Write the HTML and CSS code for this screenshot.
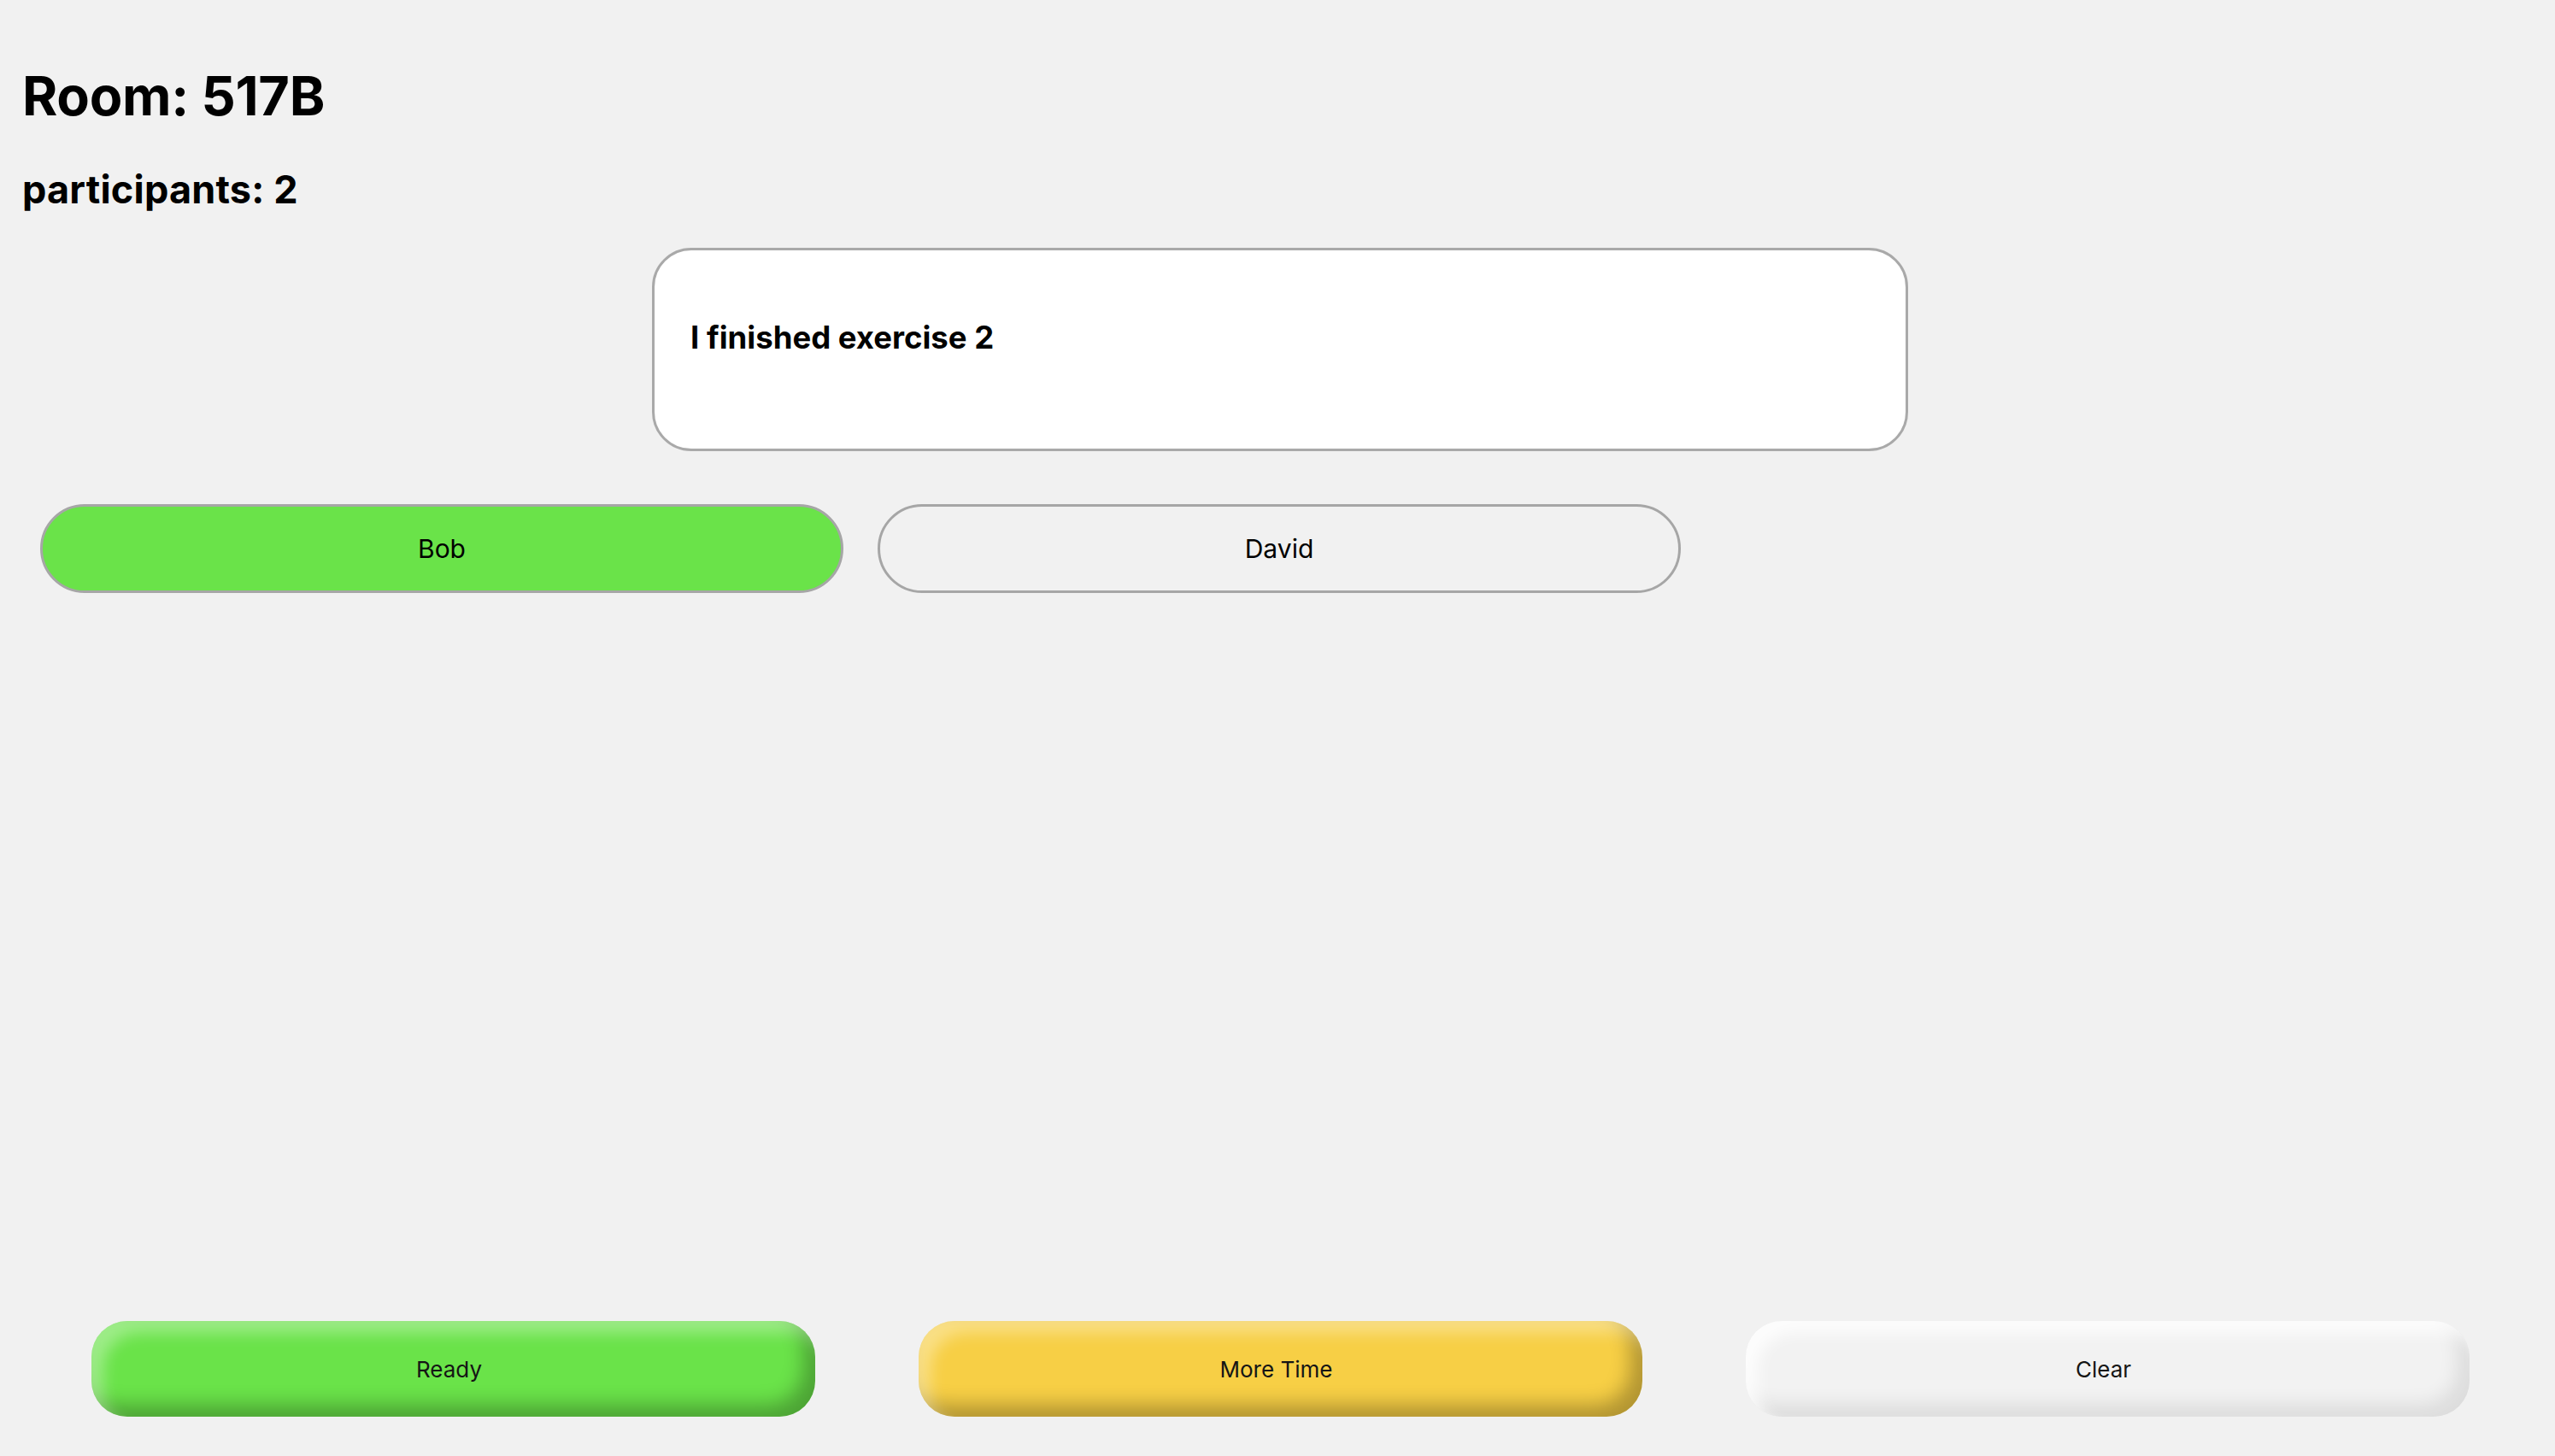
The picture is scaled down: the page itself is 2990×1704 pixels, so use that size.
FILE: index.html
```html
<!DOCTYPE html>
<html lang="en">
<head>
<meta charset="utf-8">
<title>Room 517B</title>
<link rel="stylesheet" href="styles.css">
</head>
<body>
<div class="page">
  <header class="header">
    <h1 class="room-title">Room: 517B</h1>
    <h3 class="participants">participants: 2</h3>
  </header>
  <div class="message-box">
    <h3 class="message-text">I finished exercise 2</h3>
  </div>
  <div class="people">
    <button class="person person-ready">Bob</button>
    <button class="person">David</button>
  </div>
  <div class="actions">
    <button class="action action-ready">Ready</button>
    <button class="action action-time">More Time</button>
    <button class="action action-clear">Clear</button>
  </div>
</div>
</body>
</html>
```
FILE: styles.css
```css
html, body {
  margin: 0;
  padding: 0;
  background: #f1f1f1;
}
body {
  font-family: Inter, "Noto Sans", "Liberation Sans", sans-serif;
  color: #000;
}
.page {
  min-height: 1704px;
  box-sizing: border-box;
  display: flex;
  flex-direction: column;
  padding-bottom: 46px;
}
.header {
  padding-left: 26px;
}
.room-title {
  margin: 74px 0 0 0;
  font-size: 63px;
  line-height: 76px;
  font-weight: 700;
  letter-spacing: -0.3px;
}
.participants {
  margin: 45px 0 0 0;
  font-size: 45px;
  line-height: 54px;
  font-weight: 700;
  letter-spacing: 0.2px;
}
.message-box {
  box-sizing: border-box;
  width: 1470px;
  height: 238px;
  margin: 41px auto 0 auto;
  position: relative;
  left: 3px;
  background: #fff;
  border: 3px solid #a9a9a9;
  border-radius: 46px;
  padding: 80px 42px 0 42px;
}
.message-text {
  margin: 0;
  font-size: 36.5px;
  line-height: 44px;
  font-weight: 700;
}
.people {
  display: flex;
  gap: 40px;
  padding-left: 47px;
  margin-top: 62px;
}
.person {
  box-sizing: border-box;
  width: 940px;
  height: 104px;
  border: 3px solid #a6a6a6;
  border-radius: 52px;
  background: #f1f1f1;
  font-family: Inter, "Noto Sans", "Liberation Sans", sans-serif;
  font-size: 30px;
  color: #000;
  padding: 0;
}
.person-ready {
  background: #6ae349;
}
.actions {
  margin-top: auto;
  display: flex;
  gap: 121px;
  padding-left: 107px;
}
.action {
  box-sizing: border-box;
  width: 847px;
  height: 112px;
  border: none;
  border-radius: 42px;
  font-family: Inter, "Noto Sans", "Liberation Sans", sans-serif;
  font-size: 26px;
  color: #151515;
  padding: 0 10px 0 0;
  box-shadow:
    inset 14px 14px 18px rgba(255, 255, 255, 0.35),
    inset -14px -14px 22px rgba(0, 0, 0, 0.28);
}
.action-ready {
  background: #6ae349;
}
.action-time {
  background: #f7cf45;
}
.action-clear {
  background: #f2f2f2;
  box-shadow:
    inset 14px 14px 18px rgba(255, 255, 255, 0.8),
    inset -14px -14px 22px rgba(0, 0, 0, 0.09);
}
```
